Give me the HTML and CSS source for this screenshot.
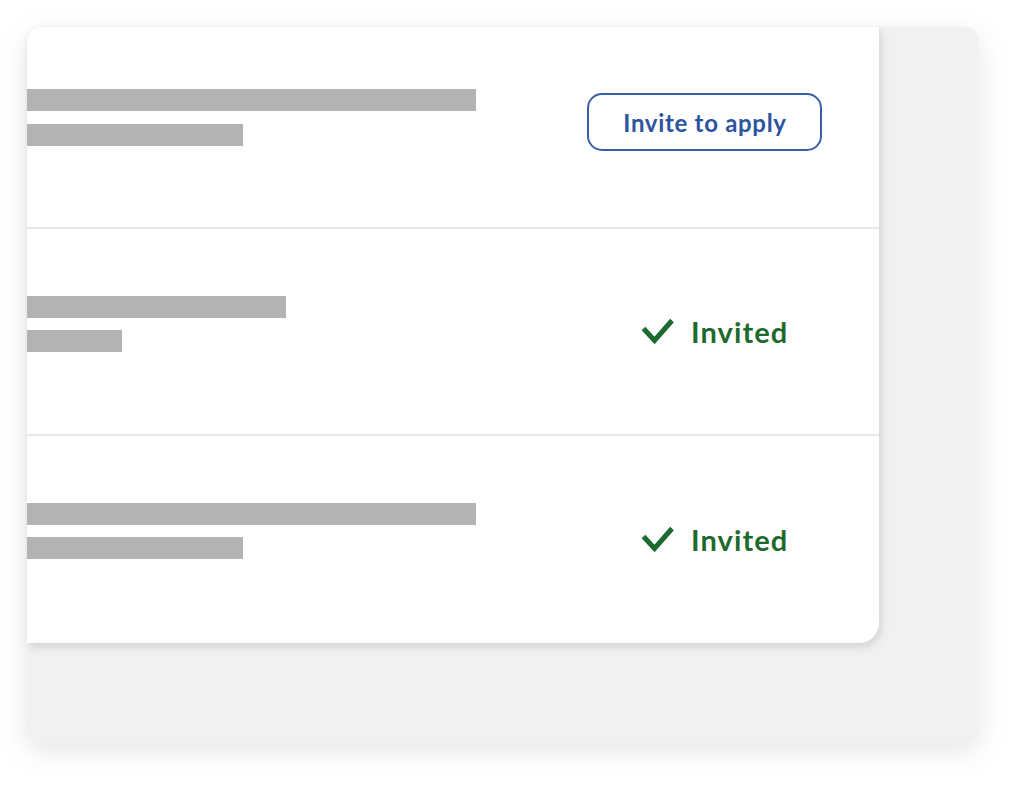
FILE: index.html
```html
<!DOCTYPE html>
<html lang="en">
<head>
<meta charset="utf-8">
<title>Invites</title>
<link rel="stylesheet" href="styles.css">
</head>
<body>
<div class="stage">
  <div class="panel">
    <div class="card">
      <div class="row row-first">
        <div class="bars bars-first">
          <div class="bar bar-long"></div>
          <div class="bar bar-mid"></div>
        </div>
        <div class="action">
          <button class="invite-btn" type="button">Invite to apply</button>
        </div>
      </div>
      <div class="row row-second">
        <div class="bars">
          <div class="bar bar-medium"></div>
          <div class="bar bar-short"></div>
        </div>
        <div class="action">
          <div class="invited">
            <svg class="check" width="34" height="28" viewBox="0 0 34 28" aria-hidden="true"><path d="M2.5 10.5 L13.5 22.5 L31 2.5" fill="none" stroke="#1e6a2e" stroke-width="5"/></svg>
            <span>Invited</span>
          </div>
        </div>
      </div>
      <div class="row row-third">
        <div class="bars">
          <div class="bar bar-long"></div>
          <div class="bar bar-mid"></div>
        </div>
        <div class="action">
          <div class="invited">
            <svg class="check" width="34" height="28" viewBox="0 0 34 28" aria-hidden="true"><path d="M2.5 10.5 L13.5 22.5 L31 2.5" fill="none" stroke="#1e6a2e" stroke-width="5"/></svg>
            <span>Invited</span>
          </div>
        </div>
      </div>
    </div>
  </div>
</div>
</body>
</html>
```

FILE: styles.css
```css
* { box-sizing: border-box; }
html, body {
  margin: 0;
  padding: 0;
  background: #ffffff;
  font-family: "Lato", "Open Sans", "Liberation Sans", sans-serif;
}
.stage {
  width: 1024px;
  height: 788px;
  padding: 27px 0 0 27px;
  overflow: hidden;
}
.panel {
  width: 952px;
  height: 716px;
  background: #f1f1f1;
  border-radius: 14px;
  box-shadow: 0 8px 28px rgba(0, 0, 0, 0.10);
}
.card {
  width: 852px;
  height: 616px;
  background: #ffffff;
  border-radius: 14px 0 20px 0;
  box-shadow: 2px 4px 8px rgba(0, 0, 0, 0.13);
  display: flex;
  flex-direction: column;
}
.row {
  display: flex;
  border-bottom: 2px solid #e7e7e7;
}
.row-first { height: 202px; }
.row-second { height: 207px; }
.row-third { height: 207px; border-bottom: none; }
.bars {
  width: 560px;
  padding-top: 67px;
  display: flex;
  flex-direction: column;
  gap: 12px;
}
.bars-first { padding-top: 62px; gap: 13px; }
.bar {
  height: 22px;
  background: #b3b3b3;
}
.bar-long { width: 449px; }
.bar-mid { width: 216px; }
.bar-medium { width: 259px; }
.bar-short { width: 95px; }
.action {
  align-self: center;
}
.row-first .action { margin-bottom: 10px; }
.invite-btn {
  width: 235px;
  height: 58px;
  border: 2px solid #3b5ea7;
  border-radius: 15px;
  background: #ffffff;
  color: #2d54a0;
  font-family: inherit;
  font-weight: 700;
  font-size: 24px;
  letter-spacing: 0.7px;
  padding: 0 0 0 1px;
  cursor: pointer;
}
.invited {
  display: flex;
  align-items: center;
  gap: 16px;
  margin-left: 54px;
  color: #1e6a2e;
  font-weight: 700;
  font-size: 29px;
  letter-spacing: 1.1px;
}
.check { display: block; }
```
